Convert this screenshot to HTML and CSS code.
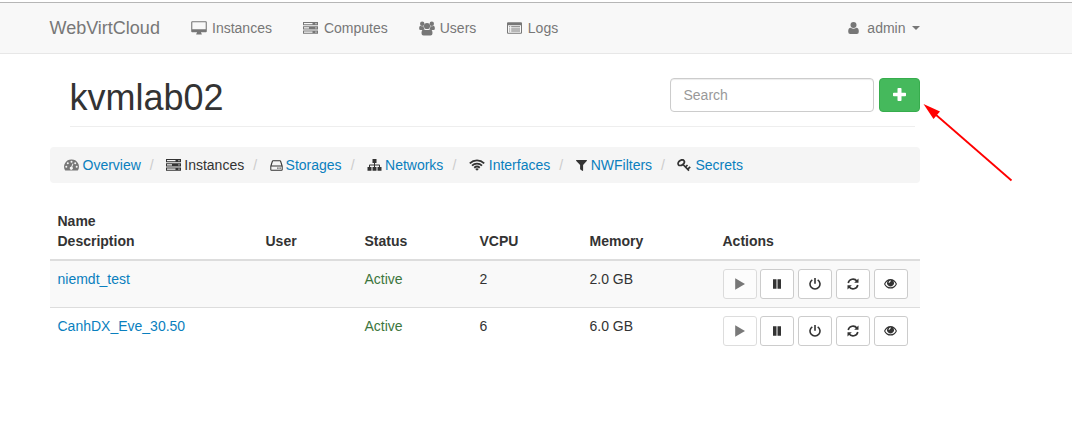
FILE: index.html
```html
<!DOCTYPE html>
<html lang="en">
<head>
<meta charset="utf-8">
<title>WebVirtCloud</title>
<link rel="stylesheet" href="styles.css">
</head>
<body>
<svg class="sprite" aria-hidden="true">
  <symbol id="desktop" viewBox="0 0 16 14"><path fill-rule="evenodd" d="M1.200 .2h13.600q1 0 1 1v9q0 1-1 1H10q0 1 .8 1.500v.8H5.200v-.8q.8-.5.8-1.500H1.200q-1 0-1-1V1.200q0-1 1-1zM1.300 1.300v6.900h13.400V1.300z"/></symbol>
  <symbol id="server" viewBox="0 0 15 12"><path fill-rule="evenodd" d="M0 0h15v3.300H0zM1 1v1.200h8.500V1zM0 4.200h15v3.300H0zM1 5.200v1.200h5V5.200zM0 8.400h15v3.400H0zM1 9.500v1.200h8.500V9.500zM12.500 1v1.200h1V1zM12.500 5.200v1.200h1V5.200zM12.500 9.500v1.200h1V9.500z"/></symbol>
  <symbol id="users" viewBox="0 0 16 15"><circle cx="3.200" cy="2.800" r="2.200"/><circle cx="12.800" cy="2.800" r="2.200"/><circle cx="8" cy="5" r="3.100"/><path d="M.2 8V6.500Q.4 4.800 1.500 4.800q1.800 1 3 .2 0 1.700 1 2.900Q4.200 7.800 3.300 8.900H1.500Q.2 8.900.2 8zM15.800 8V6.500q-.2-1.700-1.300-1.700-1.800 1-3 .2 0 1.700-1 2.900 1.300-.1 2.200 1h1.800q1.300 0 1.300-.9zM4.800 8.200q3.200 1.800 6.400 0 2.400.3 2.300 4.100 0 2.200-2 2.200h-7q-2 0-2-2.200-.1-3.800 2.300-4.100z"/></symbol>
  <symbol id="list" viewBox="0 0 15 12"><path fill-rule="evenodd" d="M1 .2h13q1 0 1 1v9.600q0 1-1 1H1q-1 0-1-1V1.200q0-1 1-1zM1 3.200v7.600h13V3.200zM2.200 4.200h1v1h-1zM4.200 4.200H13v1H4.200zM2.200 6.400h1v1h-1zM4.200 6.400H13v1H4.200zM2.200 8.600h1v1h-1zM4.200 8.600H13v1H4.200z"/></symbol>
  <symbol id="user" viewBox="0 0 11 12"><circle cx="5.500" cy="3" r="3"/><path d="M2.700 5.700q2.800 2 5.600 0 2.600.2 2.500 4 0 2.200-2 2.200H2.200q-2 0-2-2.200-.1-3.800 2.500-4z"/></symbol>
  <symbol id="gauge" viewBox="0 0 15 12"><path fill-rule="evenodd" d="M7.500 .5A7.200 7.200 0 0 1 14 11.200q-.3.400-.8.400H1.800q-.5 0-.8-.4A7.200 7.200 0 0 1 7.500.5zM7.500 1.700a1 1 0 1 0 0 2 1 1 0 0 0 0-2zM3.800 3.200a1 1 0 1 0 0 2 1 1 0 0 0 0-2zM11.200 3.200a1 1 0 1 0 0 2 1 1 0 0 0 0-2zM2.300 6.800a1 1 0 1 0 0 2 1 1 0 0 0 0-2zM12.700 6.800a1 1 0 1 0 0 2 1 1 0 0 0 0-2zM8.600 4.500l-1.400 3.300a1.500 1.500 0 1 0 1 .3l1.200-3.300z"/></symbol>
  <symbol id="disk" viewBox="0 0 13 11"><path fill-rule="evenodd" d="M3 .2h7q.8 0 1.100.8l1.600 5v3.700q0 1.100-1.100 1.100H1.400Q.3 10.800.3 9.700V6L1.900 1Q2.200.2 3 .2zM3 1.200 1.600 5.500h9.800L10 1.200zM1.300 6.500v3.300h10.400V6.500zM7.300 7.500h1.200v1.200H7.300zM9.500 7.500h1.200v1.200H9.500z"/></symbol>
  <symbol id="sitemap" viewBox="0 0 15 12"><path d="M5.500 0h4v4H8v1.500h4.200q.8 0 .8.800V8h1.500v3.800h-4V8H12V6.500H8V8h1.500v3.800h-4V8H7V6.500H3V8h1.500v3.800h-4V8H2V6.300q0-.8.800-.8H7V4H5.500z"/></symbol>
  <symbol id="wifi" viewBox="0 0 16 12"><path class="line" stroke-width="1.800" d="M.8 4.300a10.500 10.500 0 0 1 14.400 0M3 6.600a7.400 7.400 0 0 1 10 0M5.200 8.700a4.300 4.300 0 0 1 5.600 0"/><path d="M8 11.800 6.200 10q1.800-1.300 3.600 0z"/></symbol>
  <symbol id="filter" viewBox="0 0 11 11"><path d="M.3 0h10.400q.5.500 0 1L7.100 5v5.500q-.2.700-.9.300L4.100 9.200V5L.3 1Q-.2.500.3 0z"/></symbol>
  <symbol id="key" viewBox="0 0 14 13"><ellipse class="line" stroke-width="1.800" cx="4.200" cy="3.700" rx="3.400" ry="2.400" transform="rotate(-35 4.200 3.700)"/><path class="line" stroke-width="1.700" d="m5.500 5 6.500 6.600M8.500 8l2-2M10.800 10.200l2.400-2.400"/></symbol>
  <symbol id="plus" viewBox="0 0 13 13"><path d="M5.300 0h2.400q.8 0 .8.800v4h3.700q.8 0 .8.800v1.900q0 .8-.8.800H8.500v3.900q0 .8-.8.800H5.300q-.8 0-.8-.8V8.300H.8Q0 8.300 0 7.500V5.600q0-.8.800-.8h3.700v-4q0-.8.800-.8z"/></symbol>
  <symbol id="play" viewBox="0 0 12 12"><path d="M1.200 .3 11 6l-9.800 5.700z"/></symbol>
  <symbol id="pause" viewBox="0 0 12 12"><path d="M2 1.300h3.500v9.400H2zM6.500 1.300H10v9.400H6.500z"/></symbol>
  <symbol id="power" viewBox="0 0 12 12"><path class="line" stroke-width="1.600" d="M3.300 1.800a5 5 0 1 0 5.400 0M6 0v5.800"/></symbol>
  <symbol id="refresh" viewBox="0 0 12 12"><path class="line" stroke-width="1.600" d="M1.200 5A4.900 4.900 0 0 1 10 3.200M10.800 7A4.900 4.900 0 0 1 2 8.800"/><path d="M11.500 .4V4.700H7.200zM.5 11.600V7.300h4.300z"/></symbol>
  <symbol id="eye" viewBox="0 0 13 12"><path fill-rule="evenodd" d="M6.500 1.100q4.200 0 6.500 4.800-2.300 4.700-6.500 4.700T0 5.900Q2.300 1.100 6.500 1.100zM3.800 2.900Q2.300 4 1.200 5.900q2 3.300 5.300 3.300t5.300-3.300Q10.700 4 9.200 2.900a3.400 3.400 0 1 1-5.400 0zM6.600 2.500q-1.700.1-2 2 .1.500.5.500t.5-.5q0-1 1-1.100.5 0 .5-.4t-.5-.5z"/></symbol>
</svg>

<header class="navbar">
  <div class="container navbar-inner">
    <a class="brand">WebVirtCloud</a>
    <nav class="nav">
      <a><svg class="icon desktop"><use href="#desktop"/></svg>Instances</a>
      <a><svg class="icon server"><use href="#server"/></svg>Computes</a>
      <a><svg class="icon users"><use href="#users"/></svg>Users</a>
      <a><svg class="icon list"><use href="#list"/></svg>Logs</a>
    </nav>
    <a class="account"><svg class="icon user"><use href="#user"/></svg>admin<span class="caret"></span></a>
  </div>
</header>

<main class="container">
  <div class="page-header">
    <h1>kvmlab02</h1>
    <form class="tools">
      <input class="search" type="text" placeholder="Search">
      <button class="add" type="button"><svg class="icon plus"><use href="#plus"/></svg></button>
    </form>
  </div>

  <ol class="breadcrumb">
    <li><svg class="icon gauge"><use href="#gauge"/></svg><a>Overview</a></li>
    <li><svg class="icon server"><use href="#server"/></svg>Instances</li>
    <li><svg class="icon disk"><use href="#disk"/></svg><a>Storages</a></li>
    <li><svg class="icon sitemap"><use href="#sitemap"/></svg><a>Networks</a></li>
    <li><svg class="icon wifi"><use href="#wifi"/></svg><a>Interfaces</a></li>
    <li><svg class="icon filter"><use href="#filter"/></svg><a>NWFilters</a></li>
    <li><svg class="icon key"><use href="#key"/></svg><a>Secrets</a></li>
  </ol>

  <table class="table">
    <colgroup><col class="c-name"><col class="c-user"><col class="c-status"><col class="c-vcpu"><col class="c-memory"><col></colgroup>
    <thead>
      <tr><th>Name<br>Description</th><th>User</th><th>Status</th><th>VCPU</th><th>Memory</th><th>Actions</th></tr>
    </thead>
    <tbody>
      <tr>
        <td><a>niemdt_test</a></td><td></td><td class="active">Active</td><td>2</td><td>2.0 GB</td>
        <td><div class="actions">
          <button class="btn" disabled><svg class="icon"><use href="#play"/></svg></button>
          <button class="btn"><svg class="icon"><use href="#pause"/></svg></button>
          <button class="btn"><svg class="icon"><use href="#power"/></svg></button>
          <button class="btn"><svg class="icon"><use href="#refresh"/></svg></button>
          <button class="btn"><svg class="icon eye"><use href="#eye"/></svg></button>
        </div></td>
      </tr>
      <tr>
        <td><a>CanhDX_Eve_30.50</a></td><td></td><td class="active">Active</td><td>6</td><td>6.0 GB</td>
        <td><div class="actions">
          <button class="btn" disabled><svg class="icon"><use href="#play"/></svg></button>
          <button class="btn"><svg class="icon"><use href="#pause"/></svg></button>
          <button class="btn"><svg class="icon"><use href="#power"/></svg></button>
          <button class="btn"><svg class="icon"><use href="#refresh"/></svg></button>
          <button class="btn"><svg class="icon eye"><use href="#eye"/></svg></button>
        </div></td>
      </tr>
    </tbody>
  </table>
</main>

<svg class="pointer" viewBox="0 0 92 80" aria-hidden="true"><path class="shaft" d="M12 10 88.500 76.500"/><path class="head" d="M.5 0 17 7.500 10.500 15z"/></svg>
</body>
</html>
```
FILE: styles.css
```css
*, *::before { box-sizing: border-box; }
body {
  margin: 0;
  padding-top: 2px;
  overflow: hidden;
  background: #fff;
  color: #333;
  font: 14px/20px "Liberation Sans", Arial, sans-serif;
}
a { color: #0a7fbe; text-decoration: none; }
.sprite { display: none; }
.line { fill: none; stroke: currentColor; }
.icon { display: block; flex: none; width: 12px; height: 12px; fill: currentColor; }
.container { width: 870px; margin-left: 50px; }

.navbar { height: 52px; background: #f8f8f8; border-top: 1px solid #b6b6b6; border-bottom: 1px solid #e7e7e7; }
.navbar-inner { display: flex; align-items: center; height: 50px; }
.navbar a { display: flex; align-items: center; color: #777; }
.brand { width: 126.500px; margin-left: -.5px; font-size: 18px; }
.nav { display: flex; gap: 1px; }
.nav a { padding: 0 15px; }
.navbar .account { margin-left: auto; }
.caret { margin-left: 6.500px; border: 4px solid transparent; border-top-color: #777; border-bottom: 0; }

.desktop { width: 16px; height: 14px; margin-right: 5px; }
.server { width: 15px; height: 12px; }
.nav .server { margin-right: 6px; }
.users { width: 16px; height: 15px; margin-right: 5px; }
.list { width: 15px; height: 12px; margin-right: 5.500px; }
.user { width: 11px; height: 12px; margin-right: 8px; }

.page-header {
  display: flex;
  justify-content: space-between;
  height: 73px;
  margin: 0 5px 20px 20px;
  padding-top: 24px;
  border-bottom: 1px solid #eee;
}
h1 { margin: 0 0 0 -.5px; font-size: 36px; line-height: 39px; font-weight: 400; }
.tools { display: flex; gap: 5px; height: 34px; margin-right: -5px; }
.search {
  width: 204px;
  padding: 6px 12.500px;
  border: 1px solid #ccc;
  border-radius: 4px;
  box-shadow: inset 0 1px 1px rgba(0, 0, 0, .075);
  font: inherit;
}
.search::placeholder { color: #999; opacity: 1; }
.add {
  display: flex;
  align-items: center;
  justify-content: center;
  width: 41px;
  padding: 0 1px 1px 0;
  border: 1px solid #37ad4d;
  border-radius: 4px;
  background: #45b95c;
  color: #fff;
}
.plus { width: 13px; height: 13px; }

.breadcrumb {
  display: flex;
  height: 36px;
  margin: 0 0 20px;
  padding: 8px 14px;
  border-radius: 4px;
  background: #f5f5f5;
  list-style: none;
}
.breadcrumb li { display: flex; align-items: center; }
.breadcrumb li + li::before { content: "/"; width: 25.400px; padding-left: 9px; color: #ccc; }
.gauge { width: 15px; height: 12px; margin-right: 3.500px; color: #777; }
.breadcrumb .server { margin-right: 3px; }
.disk { width: 13px; height: 11px; margin-right: 3px; }
.sitemap { width: 15px; height: 12px; margin-right: 3px; }
.wifi { width: 16px; height: 12px; margin-right: 4px; }
.filter { width: 11px; height: 11px; margin-right: 4px; }
.key { width: 14px; height: 13px; margin-right: 4px; }

.table { width: 870px; table-layout: fixed; border-collapse: separate; border-spacing: 0; }
.c-name { width: 208px; }
.c-user { width: 99px; }
.c-status { width: 115px; }
.c-vcpu { width: 110px; }
.c-memory { width: 133px; }
th, td { padding: 8px 7.500px; text-align: left; }
th { vertical-align: bottom; border-bottom: 2px solid #ddd; }
td { height: 46px; vertical-align: top; }
tbody tr:first-child td { background: #f9f9f9; }
tbody tr + tr td { height: 47px; border-top: 1px solid #ddd; }
.active { color: #3c763d; }
.actions { display: flex; gap: 4px; }
.btn {
  display: flex;
  align-items: center;
  justify-content: center;
  width: 34px;
  height: 30px;
  padding: 0 0 1px;
  border: 1px solid #ccc;
  border-radius: 3px;
  background: #fff;
  color: #333;
}
.btn:disabled { margin-right: -1px; opacity: .65; }
.eye { width: 13px; }

/* Callout arrow over the page, aimed at the add button */
.pointer { position: absolute; left: 923px; top: 104px; width: 92px; height: 80px; }
.shaft { fill: none; stroke: #f00; stroke-width: 1.800; }
.head { fill: #f00; }
```
